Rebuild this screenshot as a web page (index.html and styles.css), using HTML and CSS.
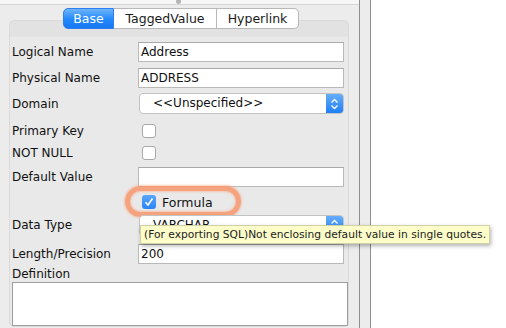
FILE: index.html
```html
<!DOCTYPE html>
<html>
<head>
<meta charset="utf-8">
<link rel="stylesheet" href="styles.css">
</head>
<body>
<div class="window">
  <div class="left">
    <div class="topbar"><span class="grip"></span></div>
    <div class="tabs">
      <div class="tab active">Base</div>
      <div class="tab">TaggedValue</div>
      <div class="tab last">Hyperlink</div>
    </div>
    <div class="group">
      <div class="row r1"><span class="lbl">Logical Name</span><div class="input">Address</div></div>
      <div class="row r2"><span class="lbl">Physical Name</span><div class="input">ADDRESS</div></div>
      <div class="row r3"><span class="lbl">Domain</span><div class="select"><span class="seltext">&lt;&lt;Unspecified&gt;&gt;</span><span class="selbtn"><svg width="9" height="14" viewBox="0 0 9 14"><path d="M1.5 5.5 L4.5 2.5 L7.5 5.5 M1.5 8.5 L4.5 11.5 L7.5 8.5" fill="none" stroke="#fff" stroke-width="1.4"/></svg></span></div></div>
      <div class="row r4"><span class="lbl">Primary Key</span><span class="cb"></span></div>
      <div class="row r5"><span class="lbl">NOT NULL</span><span class="cb"></span></div>
      <div class="row r6"><span class="lbl">Default Value</span><div class="input"></div></div>
      <div class="row r7"><span class="lbl"></span><span class="cb checked"><svg width="14" height="14" viewBox="0 0 14 14"><path d="M3.5 7.3 L6 10 L10.5 3.5" fill="none" stroke="#fff" stroke-width="1.6"/></svg></span><span class="cbtext">Formula</span>
        <span class="highlight"></span>
      </div>
      <div class="row r8"><span class="lbl">Data Type</span><div class="select"><span class="seltext">VARCHAR</span><span class="selbtn"><svg width="9" height="14" viewBox="0 0 9 14"><path d="M1.5 5.5 L4.5 2.5 L7.5 5.5 M1.5 8.5 L4.5 11.5 L7.5 8.5" fill="none" stroke="#fff" stroke-width="1.4"/></svg></span></div>
        <div class="tooltip">(For exporting SQL)Not enclosing default value in single quotes.</div>
      </div>
      <div class="row r9"><span class="lbl">Length/Precision</span><div class="input">200</div></div>
      <div class="deflbl">Definition</div>
      <div class="textarea"></div>
    </div>
  </div>
  <div class="splitter"></div>
  <div class="right"></div>
</div>
</body>
</html>
```
FILE: styles.css
```css
html, body {
  margin: 0;
  padding: 0;
  width: 506px;
  height: 328px;
  overflow: hidden;
  background: #ececec;
  font-family: "DejaVu Sans", sans-serif;
  font-size: 12px;
  color: #111;
}
.window {
  display: flex;
  height: 328px;
}
.left {
  width: 359px;
  flex: none;
  background: #ececec;
  position: relative;
}
.topbar {
  height: 4px;
  background: #f6f6f6;
  border-bottom: 1px solid #d8d8d8;
  position: relative;
}
.grip {
  position: absolute;
  left: 176px;
  top: -1px;
  width: 5px;
  height: 5px;
  border-radius: 50%;
  background: #b4b4b4;
}
.splitter {
  width: 10px;
  flex: none;
  border-left: 1px solid #8e8e8e;
  border-right: 1px solid #8e8e8e;
  background: #ececec;
}
.right {
  flex: 1;
  background: #fff;
}
.tabs {
  display: flex;
  justify-content: center;
  margin: 3px 0 0 0;
  position: relative;
  z-index: 2;
  padding-left: 3px;
}
.tab {
  height: 19px;
  line-height: 19px;
  background: #fff;
  border: 1px solid #b8b8b8;
  border-left: none;
  padding: 0;
  text-align: center;
  color: #1a1a1a;
  font-size: 12.5px;
}
.tab.active {
  width: 49px;
  border: 1px solid #2c7ff0;
  border-radius: 5px 0 0 5px;
  background: linear-gradient(#6db4fb, #2389fb 55%, #1677f4);
  color: #fff;
}
.tab:nth-child(2) { width: 102px; }
.tab.last {
  width: 81px;
  border-radius: 0 5px 5px 0;
}
.group {
  margin: -9px 10px 0 9px;
  height: 284px;
  border: 1px solid #dadada;
  border-radius: 5px;
  background: linear-gradient(#e2e2e2 0, #e2e2e2 15px, #e9e9e9 16px);
  padding: 21px 0 0 2px;
  position: relative;
}
.row {
  display: flex;
  align-items: center;
  height: 20px;
  position: relative;
}
.r2 { margin-top: 6px; }
.r3 { margin-top: 5px; height: 21px; }
.r4 { margin-top: 7px; }
.r5 { margin-top: 2px; }
.r6 { margin-top: 4px; }
.r7 { margin-top: 5px; }
.r8 { margin-top: 3px; }
.r9 { margin-top: 9px; }
.lbl {
  width: 126px;
  flex: none;
}
.input {
  width: 202px;
  height: 18px;
  background: #fff;
  border: 1px solid #b9b9b9;
  border-top-color: #a9a9a9;
  line-height: 19px;
  padding-left: 2px;
  font-size: 12px;
}
.select {
  margin-left: 1px;
  width: 203px;
  height: 19px;
  background: #fff;
  border: 1px solid #c3c3c3;
  border-radius: 4px;
  display: flex;
  overflow: hidden;
}
.seltext {
  flex: 1;
  padding-left: 13px;
  line-height: 19px;
}
.selbtn {
  width: 17px;
  background: linear-gradient(#65adfb, #1f7ff6);
  display: flex;
  align-items: center;
  justify-content: center;
}
.cb {
  margin-left: 4px;
  width: 12px;
  height: 12px;
  border: 1px solid #a8a8a8;
  border-radius: 3px;
  background: #fff;
  flex: none;
}
.cb.checked {
  width: 14px;
  height: 14px;
  border: none;
  background: linear-gradient(#5aa6fb, #2a85f6);
  display: flex;
}
.cbtext {
  margin-left: 6px;
  font-size: 12.5px;
}
.highlight {
  position: absolute;
  left: 113px;
  top: -6px;
  width: 106px;
  height: 21px;
  border: 5px solid rgba(247, 150, 108, 0.85);
  border-radius: 16px;
  box-shadow: 0 0 2px 1px rgba(248, 170, 135, 0.6), inset 0 0 2px 1px rgba(248, 170, 135, 0.6);
  filter: blur(0.5px);
}
.tooltip {
  position: absolute;
  left: 128px;
  top: 10px;
  width: 345px;
  height: 17px;
  line-height: 17px;
  background: #fdfdc9;
  border: 1px solid #d2d2a6;
  box-shadow: 1px 2px 4px rgba(0,0,0,0.3);
  padding-left: 3px;
  font-size: 10.7px;
  color: #222;
  white-space: nowrap;
  z-index: 5;
}
.deflbl {
  margin-top: 2px;
  height: 16px;
  line-height: 16px;
}
.textarea {
  width: 334px;
  height: 42px;
  background: #fff;
  border: 1px solid #9d9d9d;
}
```
